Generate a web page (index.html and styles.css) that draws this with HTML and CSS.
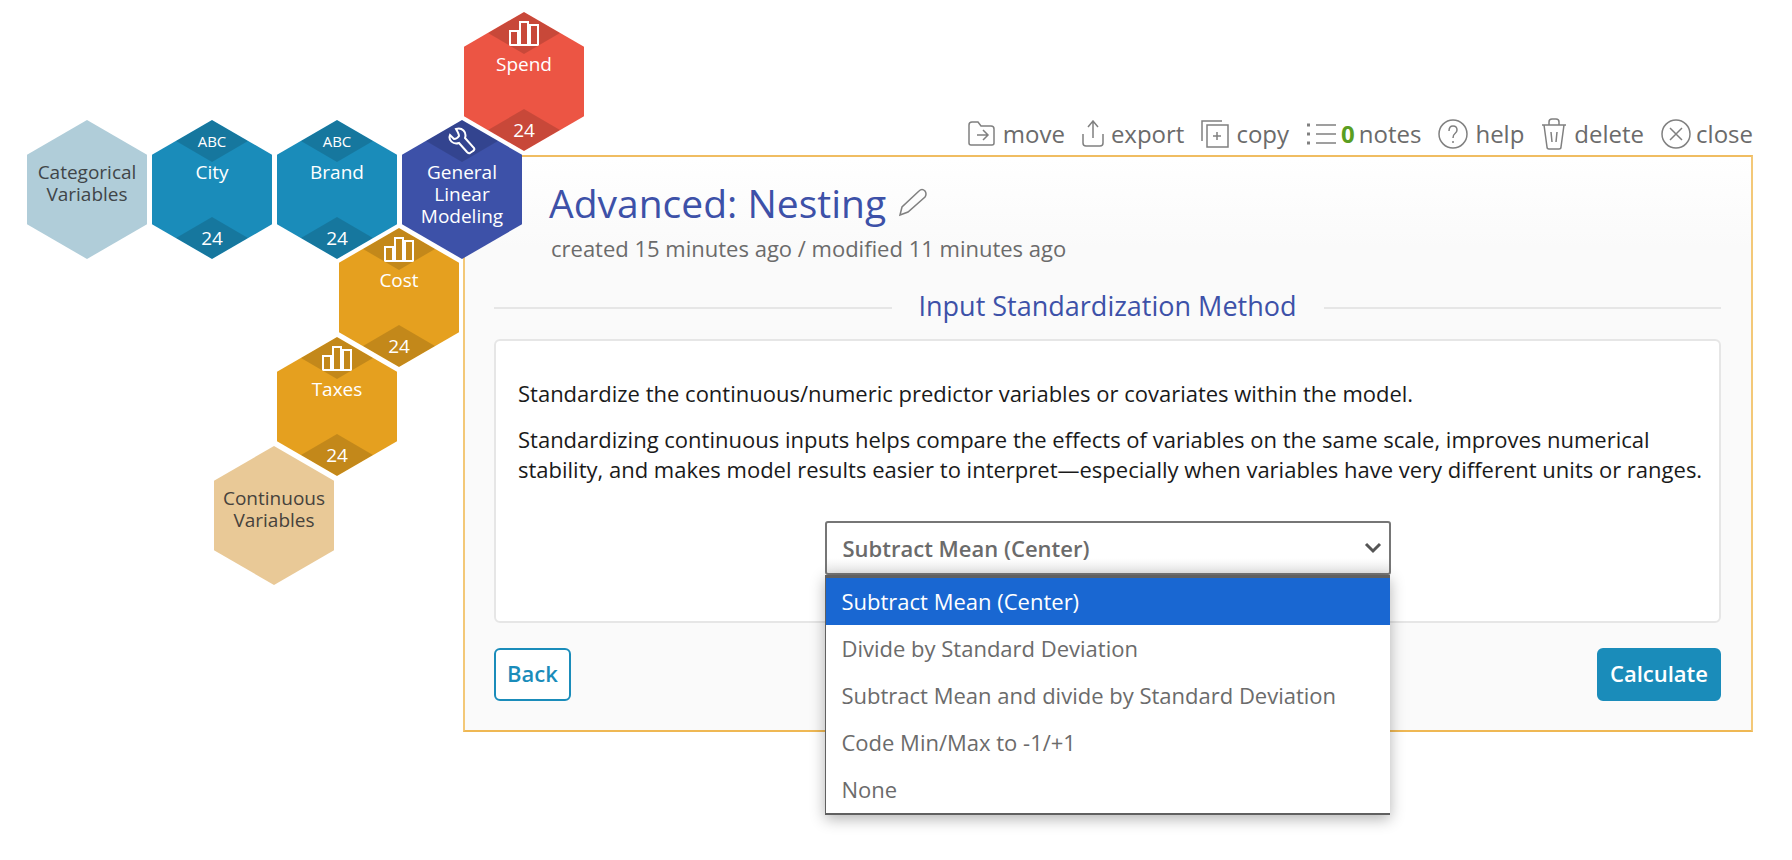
FILE: index.html
```html
<!DOCTYPE html>
<html lang="en">
<head>
    <meta charset="UTF-8">
    <meta name="viewport" content="width=device-width, initial-scale=1">
    <title>Advanced: Nesting</title>
    <link rel="stylesheet" href="styles.css">
</head>
<body>
    <!-- shared icons -->
    <svg class="defs" aria-hidden="true">
        <symbol id="bars" viewBox="0 0 30 25">
            <path d="M1 10h8v14H1zM11 1h8v23h-8zM21 4h8v20h-8z"/>
        </symbol>
    </svg>
    <div class="page">
        <div class="graph">
            <div class="hex red spend">
                <span class="cap"><svg class="icon-bars"><use href="#bars"/></svg></span>
                <span class="label">Spend</span>
                <span class="count">24</span>
            </div>
            <div class="hex paleblue categorical">
                <span class="label">Categorical<br>Variables</span>
            </div>
            <div class="hex blue city">
                <span class="cap">ABC</span>
                <span class="label">City</span>
                <span class="count">24</span>
            </div>
            <div class="hex blue brand">
                <span class="cap">ABC</span>
                <span class="label">Brand</span>
                <span class="count">24</span>
            </div>
            <div class="hex indigo model">
                <span class="cap">
                    <svg class="icon-wrench" viewBox="0 0 28 28"><path d="M8 2C14 0 19 5 17 11L26 21Q27 23 25 24L22 26Q21 27 19 25L11 16C5 18 0 13 2 8L6 12Q9 12 11 9Q11 7 8 2Z"/></svg>
                </span>
                <span class="label">General<br>Linear<br>Modeling</span>
            </div>
            <div class="hex orange cost">
                <span class="cap"><svg class="icon-bars"><use href="#bars"/></svg></span>
                <span class="label">Cost</span>
                <span class="count">24</span>
            </div>
            <div class="hex orange taxes">
                <span class="cap"><svg class="icon-bars"><use href="#bars"/></svg></span>
                <span class="label">Taxes</span>
                <span class="count">24</span>
            </div>
            <div class="hex sand continuous">
                <span class="label">Continuous<br>Variables</span>
            </div>
        </div>

        <div class="work">
            <div class="toolbar">
                <button type="button" class="tool">
                    <svg width="28" height="26" viewBox="0 0 28 26"><path d="M1 22V4Q1 1 4 1H10L13 5H23Q26 5 26 8V22Q26 24 24 24H3Q1 24 1 22ZM9 14H20M15 9L20 14L15 19"/></svg>
                    <span>move</span>
                </button>
                <button type="button" class="tool">
                    <svg width="22" height="28" viewBox="0 0 22 28"><path d="M1 14V23Q1 26 4 26H18Q21 26 21 23V14M11 18V2M6 7L11 1L16 7"/></svg>
                    <span>export</span>
                </button>
                <button type="button" class="tool">
                    <svg width="28" height="28" viewBox="0 0 28 28"><path d="M6 5H27V27H6ZM1 21V1H21M16 12V20M12 16H20"/></svg>
                    <span>copy</span>
                </button>
                <button type="button" class="tool tool-notes">
                    <svg width="31" height="22" viewBox="0 0 31 22"><path d="M10 2H30M10 11H30M10 20H30"/><path class="dots" d="M1 2H4M1 11H4M1 20H4"/></svg>
                    <b>0</b>
                    <span>notes</span>
                </button>
                <button type="button" class="tool">
                    <svg width="30" height="30" viewBox="0 0 30 30"><circle cx="15" cy="15" r="14"/><path d="M11 12Q11 7 15 7T19 11Q19 13 17 14.500T15 19M15 22V24"/></svg>
                    <span>help</span>
                </button>
                <button type="button" class="tool tool-delete">
                    <svg width="26" height="32" viewBox="0 0 26 32"><path d="M1 7H25M3 7L6 29Q6 31 8 31H18Q20 31 20 29L23 7M8 7V4Q8 1 11 1H15Q18 1 18 4V7M10 14L11 24M16 14L15 24"/></svg>
                    <span>delete</span>
                </button>
                <button type="button" class="tool tool-close">
                    <svg width="30" height="30" viewBox="0 0 30 30"><circle cx="15" cy="15" r="14"/><path d="M9 9L21 21M21 9L9 21"/></svg>
                    <span>close</span>
                </button>
            </div>
            <div class="panel">
                <div class="head">
                    <h1>Advanced: Nesting</h1>
                    <button type="button" class="edit" aria-label="Edit title">
                        <svg width="30" height="30" viewBox="0 0 30 30"><path d="M2 27L4 19L21 3Q24 0 27 3Q29 6 27 9L10 24Z"/></svg>
                    </button>
                </div>
                <p class="dates">created 15 minutes ago / modified 11 minutes ago</p>
                <h2>Input Standardization Method</h2>
                <div class="box">
                    <p>Standardize the continuous/numeric predictor variables or covariates within the model.</p>
                    <p>Standardizing continuous inputs helps compare the effects of variables on the same scale, improves numerical stability, and makes model results easier to interpret—especially when variables have very different units or ranges.</p>
                    <div class="picker">
                        <select id="method" aria-label="Input Standardization Method">
                            <option>Subtract Mean (Center)</option>
                            <option>Divide by Standard Deviation</option>
                            <option>Subtract Mean and divide by Standard Deviation</option>
                            <option>Code Min/Max to -1/+1</option>
                            <option>None</option>
                        </select>
                        <svg class="arrow" width="18" height="12" viewBox="0 0 18 12"><path d="M2 2L9 9L16 2"/></svg>
                        <ul class="menu">
                            <li class="active">Subtract Mean (Center)</li>
                            <li>Divide by Standard Deviation</li>
                            <li>Subtract Mean and divide by Standard Deviation</li>
                            <li>Code Min/Max to -1/+1</li>
                            <li>None</li>
                        </ul>
                    </div>
                </div>
                <div class="actions">
                    <button type="button" class="btn btn-back">Back</button>
                    <button type="button" class="btn btn-primary">Calculate</button>
                </div>
            </div>
        </div>
    </div>
</body>
</html>
```
FILE: styles.css
```css
*{
    margin:0;
    padding:0;
    box-sizing:border-box;
}
body{
    min-height:100vh;
    background:#fff;
    color:#6b6b6b;
    font-family:"Open Sans","Noto Sans",sans-serif;
    font-size:22px;
    line-height:30px;
}
button,select{
    font:inherit;
    color:inherit;
}
button{
    background:none;
    border:0;
    cursor:pointer;
}
svg{
    fill:none;
    stroke:currentColor;
    flex:none;
}
.defs{
    position:absolute;
    width:0;
    height:0;
}
.page{
    display:grid;
    grid-template-columns:463px minmax(0,1fr);
    padding:12px 39px 40px 0;
}

/* hexagon map: each hexagon starts half a hexagon after the one above */
.graph{
    display:grid;
    grid-template-columns:repeat(4,62px 63px);
    grid-template-rows:108px 108px 109px 109px;
    padding-left:27px;
    z-index:1;
}
.spend{ grid-area:1/8; }
.categorical{ grid-area:2/1; }
.city{ grid-area:2/3; }
.brand{ grid-area:2/5; }
.model{ grid-area:2/7; }
.cost{ grid-area:3/6; }
.taxes{ grid-area:4/5; }
.continuous{ grid-area:5/4; }
.hex{
    position:relative;
    width:120px;
    height:139px;
    padding-top:41px;
    clip-path:polygon(50% 0,100% 25%,100% 75%,50% 100%,0 75%,0 25%);
    color:#fff;
    font-size:19px;
    line-height:22px;
    font-weight:500;
    text-align:center;
}
.label{
    display:block;
}
.cap,.count{
    position:absolute;
    left:24px;
    width:72px;
    height:42px;
    display:flex;
    align-items:center;
    justify-content:center;
    background:rgba(0,0,0,0.15);
    clip-path:polygon(50% 0,100% 50%,50% 100%,0 50%);
}
.cap{
    top:0;
    font-size:15px;
}
.count{
    bottom:0;
}
.red{ background:#ec5544; }
.blue{ background:#1a8cba; }
.indigo{ background:#3d51a8; }
.orange{ background:#e5a01f; }
.paleblue{ background:#b0cdd9; color:#404548; }
.sand{ background:#e9c997; color:#46423c; }
.icon-bars{
    width:30px;
    height:25px;
    stroke-width:2;
}
.icon-wrench{
    width:28px;
    height:28px;
    stroke-width:2;
}

.work{
    padding-top:102px;
}
.toolbar{
    display:flex;
    justify-content:flex-end;
    align-items:center;
    gap:17px;
    height:41px;
    padding-bottom:2px;
    font-size:24px;
}
.tool{
    display:flex;
    align-items:center;
    gap:7px;
    stroke-width:1.5;
}
.tool svg,.edit svg{
    stroke:#808080;
}
.tool b{
    color:#5a9e22;
}
.tool-notes{
    gap:4px;
}
.tool-close{
    gap:5px;
}
.dots{
    stroke-width:3;
}
.panel{
    border:2px solid #f3c878;
    border-top-color:#f0bd62;
    border-bottom-color:#efb854;
    padding:22px 30px 29px 29px;
    background:linear-gradient(#fff,#fafafa 90px);
}
.head{
    display:flex;
    align-items:center;
    gap:12px;
    padding-left:55px;
}
.head h1{
    color:#3d51a8;
    font-size:39px;
    line-height:48px;
    font-weight:400;
}
.edit{
    display:flex;
    stroke-width:1.5;
}
.dates{
    padding-left:57px;
    margin-top:6px;
}
.panel h2{
    display:flex;
    align-items:center;
    gap:27px;
    margin-top:25px;
    color:#3d51a8;
    font-size:27px;
    line-height:36px;
    font-weight:400;
}
.panel h2:before,.panel h2:after{
    content:"";
    flex:1;
    height:2px;
    margin-top:4px;
    background:#e6e6e6;
}
.box{
    margin-top:15px;
    padding:37px 22px 46px;
    border:2px solid #e6e6e6;
    border-radius:6px;
    background:#fff;
    color:#1a1a1a;
}
.box p{
    margin:0 -12px 16px 0;
}
.picker{
    position:relative;
    width:566px;
    max-width:100%;
    margin:37px auto 0;
    color:#6b6b6b;
}
.picker select{
    display:block;
    width:100%;
    height:54px;
    padding:0 16px;
    border:2px solid #767676;
    border-radius:3px;
    background:linear-gradient(#fff 70%,#e9e9e9);
    font-weight:600;
    appearance:none;
}
.arrow{
    position:absolute;
    right:9px;
    top:21px;
    stroke:#555;
    stroke-width:3;
}
.menu{
    position:absolute;
    top:54px;
    left:0;
    right:1px;
    list-style:none;
    background:#fff;
    border:solid #606060;
    border-width:3px 0 2px 1px;
    box-shadow:0 4px 14px rgba(0,0,0,0.3);
}
.menu li{
    padding:0 16px;
    line-height:47px;
}
.menu .active{
    background:#1967d2;
    color:#fff;
}
.actions{
    display:flex;
    justify-content:space-between;
    margin-top:25px;
}
.btn{
    height:53px;
    padding:0 11px 4px;
    border:2px solid #1a8cba;
    border-radius:6px;
    font-weight:600;
}
.btn-back{
    background:#fff;
    color:#1a8cba;
}
.btn-primary{
    background:#1a8cba;
    color:#fff;
}
```
